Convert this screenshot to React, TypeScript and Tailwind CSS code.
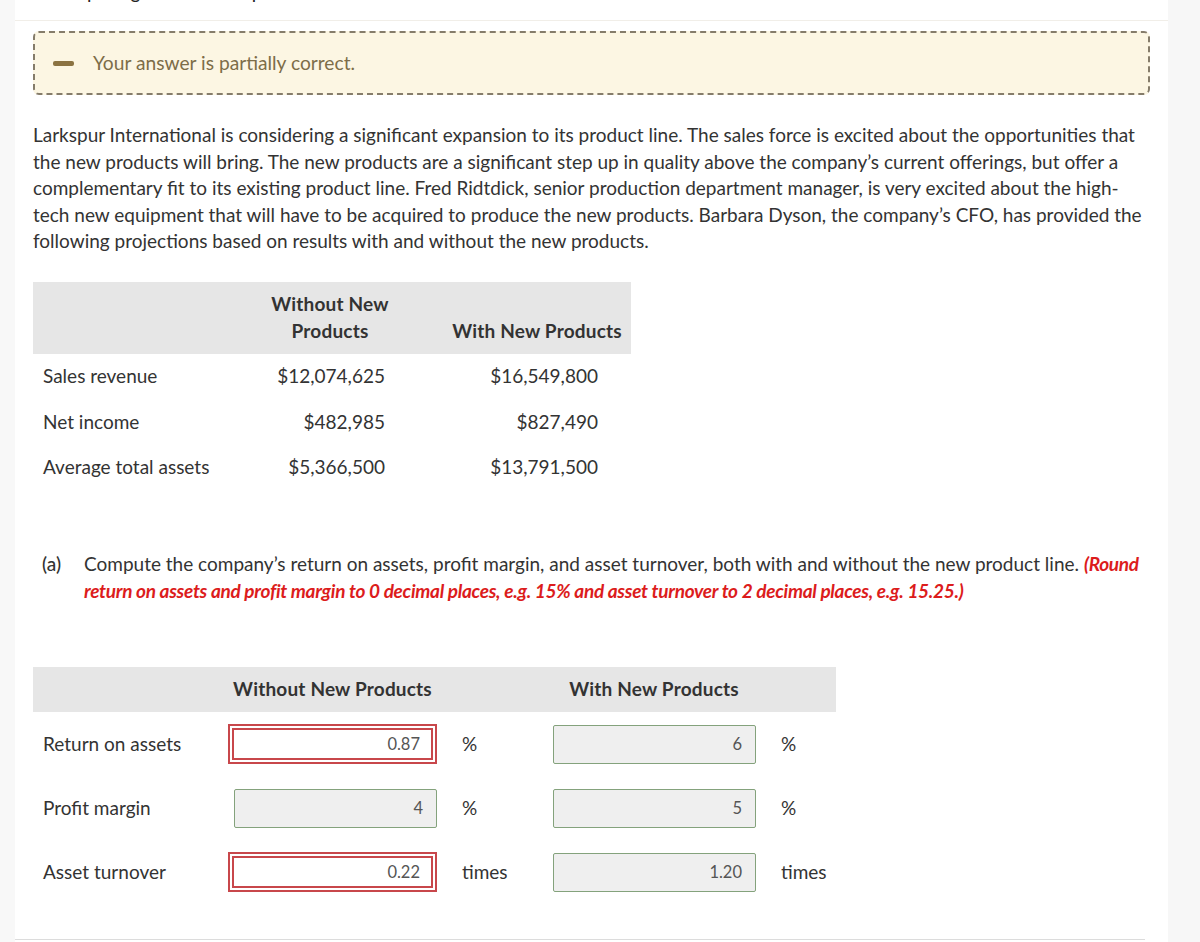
import React from 'react';

type Answer = { value: string; status: 'wrong' | 'right' };

interface ResultRow {
    label: string;
    unit: string;
    without: Answer;
    withNew: Answer;
}

const projections = [
    { label: 'Sales revenue', without: '$12,074,625', withNew: '$16,549,800' },
    { label: 'Net income', without: '$482,985', withNew: '$827,490' },
    { label: 'Average total assets', without: '$5,366,500', withNew: '$13,791,500' },
];

const results: ResultRow[] = [
    { label: 'Return on assets', unit: '%', without: { value: '0.87', status: 'wrong' }, withNew: { value: '6', status: 'right' } },
    { label: 'Profit margin', unit: '%', without: { value: '4', status: 'right' }, withNew: { value: '5', status: 'right' } },
    { label: 'Asset turnover', unit: 'times', without: { value: '0.22', status: 'wrong' }, withNew: { value: '1.20', status: 'right' } },
];

const AnswerBox: React.FC<{ answer: Answer }> = ({ answer }) => {
    if (answer.status === 'wrong') {
        return (
            <div className="h-[40px] w-[209px] border-2 border-[#c8474b] bg-white shadow-[inset_0_0_0_2px_#ffffff,inset_0_0_0_4px_#c8474b] flex items-center justify-end pr-[15px] text-[16.5px] text-[#555]">
                {answer.value}
            </div>
        );
    }
    return (
        <div className="h-[39px] w-[203px] ml-auto border border-[#84a27c] rounded-[2px] bg-[#efefef] flex items-center justify-end pr-[13px] text-[16.5px] text-[#555]">
            {answer.value}
        </div>
    );
};

export default function App() {
    return (
        <div className="flex min-h-[942px] bg-white text-[#333] font-['Lato','Open_Sans',sans-serif]">
            <div className="w-[15px] shrink-0 bg-[#f8f8f8]" />

            <div className="w-[1153px] shrink-0 bg-white">
                {/* heading that scrolled off the top */}
                <div className="h-[21px] overflow-hidden border-b border-[#f1eee8]">
                    <div className="-mt-[21px] pl-[33px] text-[19px] leading-[26px] text-[#222]">
                        Computing ratios and expansion
                    </div>
                </div>

                <div className="px-[18px]">
                    <div className="mt-[10px] h-[64px] rounded-[6px] border-2 border-dashed border-[#857c6a] bg-[#fcf6e3] flex items-center pl-[18px]">
                        <span className="block w-[21px] h-[5px] rounded-[2px] bg-[#8b7342]" />
                        <span className="ml-[19px] text-[19.2px] text-[#7d6d48]">Your answer is partially correct.</span>
                    </div>

                    <p className="mt-[27px] text-[19px] leading-[26.5px] text-[#333]">
                        Larkspur International is considering a significant expansion to its product line. The sales force is excited about the opportunities that the new products will bring. The new products are a significant step up in quality above the company’s current offerings, but offer a complementary fit to its existing product line. Fred Ridtdick, senior production department manager, is very excited about the high-tech new equipment that will have to be acquired to produce the new products. Barbara Dyson, the company’s CFO, has provided the following projections based on results with and without the new products.
                    </p>

                    <div className="mt-[27px] w-[598px] text-[19px]">
                        <div className="grid grid-cols-[202px_190px_206px] h-[72px] bg-[#e6e6e6] font-bold text-[#333] leading-[27px] tracking-[0.01em]">
                            <div />
                            <div className="flex items-end justify-center pb-[10px] text-center">
                                Without New<br />Products
                            </div>
                            <div className="flex items-end justify-center pb-[10px] pl-[18px]">
                                With New Products
                            </div>
                        </div>
                        {projections.map((row) => (
                            <div key={row.label} className="grid grid-cols-[202px_190px_206px] h-[45.5px] items-center">
                                <div className="pl-[10px]">{row.label}</div>
                                <div className="text-right pr-[40px]">{row.without}</div>
                                <div className="text-right pr-[33px]">{row.withNew}</div>
                            </div>
                        ))}
                    </div>

                    <div className="mt-[60px] flex text-[19px] leading-[27px]">
                        <span className="w-[51px] shrink-0 pl-[9px] font-medium">(a)</span>
                        <p>
                            Compute the company’s return on assets, profit margin, and asset turnover, both with and without the new product line.{' '}
                            <span className="font-bold italic text-[#dc1c1c] tracking-[-0.015em]">
                                (Round return on assets and profit margin to 0 decimal places, e.g. 15% and asset turnover to 2 decimal places, e.g. 15.25.)
                            </span>
                        </p>
                    </div>

                    <div className="mt-[63px] w-[803px] text-[19px]">
                        <div className="grid grid-cols-[195px_209px_115px_204px_80px] h-[45px] items-center bg-[#e6e6e6] font-bold text-[#333] tracking-[0.01em]">
                            <div />
                            <div className="text-center">Without New Products</div>
                            <div />
                            <div className="text-center">With New Products</div>
                            <div />
                        </div>
                        {results.map((row) => (
                            <div key={row.label} className="grid grid-cols-[195px_209px_115px_204px_80px] h-[64px] items-center">
                                <div className="pl-[10px]">{row.label}</div>
                                <AnswerBox answer={row.without} />
                                <div className="pl-[25px]">{row.unit}</div>
                                <AnswerBox answer={row.withNew} />
                                <div className="pl-[25px]">{row.unit}</div>
                            </div>
                        ))}
                    </div>
                </div>

                <div className="mt-[35px] mr-[23px] border-t border-[#dcdcdc]" />
            </div>

            <div className="flex-1 bg-[#f7f7f7]" />
        </div>
    );
}
